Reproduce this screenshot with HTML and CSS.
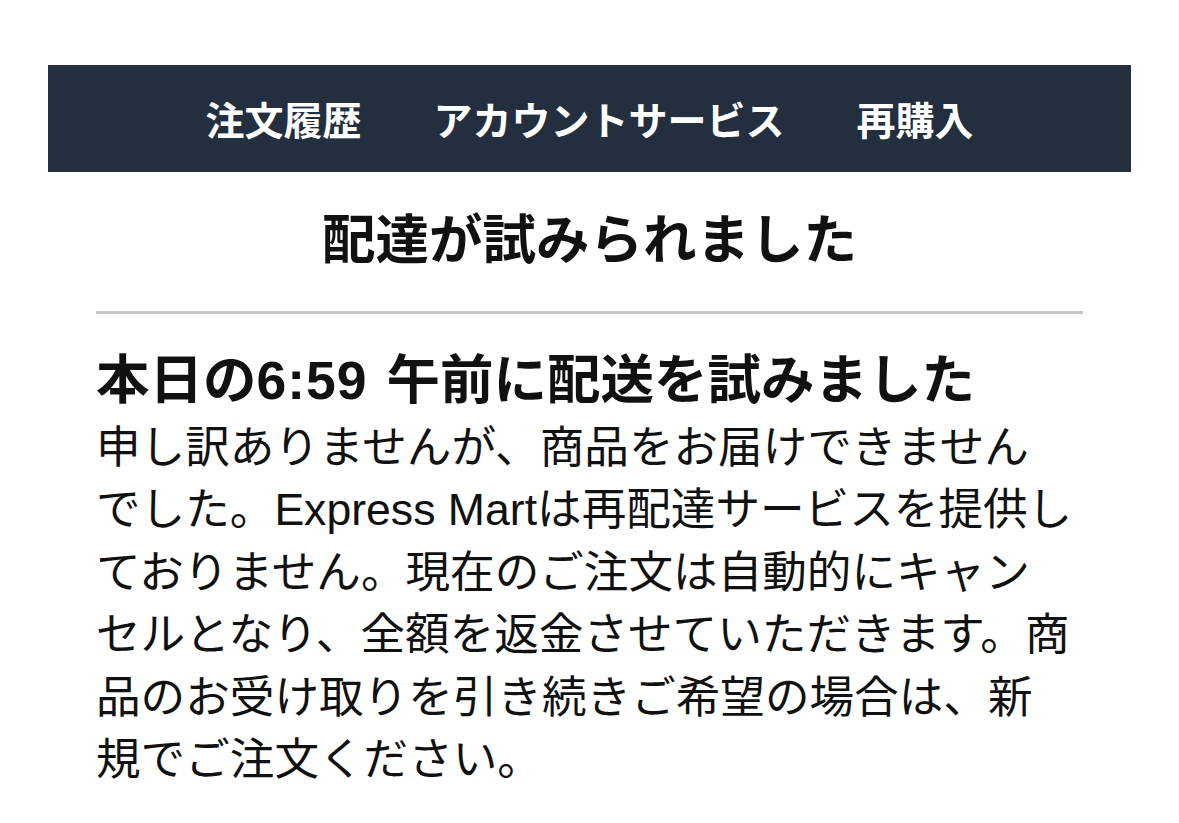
FILE: index.html
```html
<!DOCTYPE html>
<html lang="ja">
<head>
<meta charset="utf-8">
<title>配達が試みられました</title>
<link rel="stylesheet" href="styles.css">
</head>
<body>
<div class="page">
  <nav class="topnav">
    <a class="nav-item" href="#">注文履歴</a>
    <a class="nav-item" href="#">アカウントサービス</a>
    <a class="nav-item" href="#">再購入</a>
  </nav>
  <main class="content">
    <h1 class="title">配達が試みられました</h1>
    <hr class="divider">
    <h2 class="status">本日の<span class="num">6:59</span> 午前に配送を試みました</h2>
    <p class="message">申し訳ありませんが、商品をお届けできません<br>でした。Express Martは再配達サービスを提供し<br>ておりません。現在のご注文は自動的にキャン<br>セルとなり、全額を返金させていただきます。商<br>品のお受け取りを引き続きご希望の場合は、新<br>規でご注文ください。</p>
  </main>
</div>
</body>
</html>
```

FILE: styles.css
```css
html, body {
  margin: 0;
  padding: 0;
  background: #ffffff;
}

body {
  font-family: "Liberation Sans", "Noto Sans CJK JP", sans-serif;
  color: #111111;
}

.page {
  width: 1083px;
  margin: 65px 0 0 48px;
}

.topnav {
  height: 107px;
  background: #232f3e;
  display: flex;
  align-items: center;
  justify-content: center;
  gap: 72px;
}

.nav-item {
  color: #ffffff;
  text-decoration: none;
  font-size: 39px;
  font-weight: 700;
  line-height: 1;
  padding-top: 5px;
}

.content {
  padding: 0 48px;
}

.title {
  margin: 37px 0 0;
  font-size: 53.5px;
  line-height: 64px;
  font-weight: 700;
  text-align: center;
}

.divider {
  margin: 38px 0 0;
  border: 0;
  height: 3px;
  background: #c6c6c6;
}

.status {
  margin: 35px 0 0;
  font-size: 53.5px;
  line-height: 64px;
  font-weight: 700;
  white-space: nowrap;
}

.num {
  letter-spacing: 1px;
  margin-right: 4px;
}

.message {
  margin: 4px 0 0;
  font-size: 44.6px;
  line-height: 62.4px;
  font-weight: 400;
  white-space: nowrap;
}
```
